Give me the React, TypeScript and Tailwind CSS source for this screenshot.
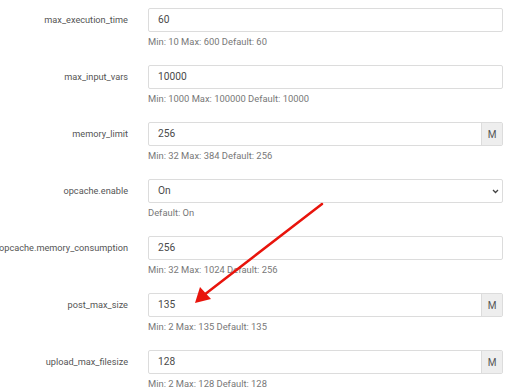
import React from "react";

type Row = {
  label: string;
  value: string;
  help: string;
  addon?: string;
  select?: boolean;
};

const rows: Row[] = [
  { label: "max_execution_time", value: "60", help: "Min: 10 Max: 600 Default: 60" },
  { label: "max_input_vars", value: "10000", help: "Min: 1000 Max: 100000 Default: 10000" },
  { label: "memory_limit", value: "256", help: "Min: 32 Max: 384 Default: 256", addon: "M" },
  { label: "opcache.enable", value: "On", help: "Default: On", select: true },
  { label: "opcache.memory_consumption", value: "256", help: "Min: 32 Max: 1024 Default: 256" },
  { label: "post_max_size", value: "135", help: "Min: 2 Max: 135 Default: 135", addon: "M" },
  { label: "upload_max_filesize", value: "128", help: "Min: 2 Max: 128 Default: 128", addon: "M" },
];

export default function App() {
  return (
    <div
      className="relative w-[512px] h-[390px] bg-white overflow-hidden"
      style={{ fontFamily: "Roboto, 'Liberation Sans', sans-serif" }}
    >
      <div className="flex flex-col pt-[8px] pr-[9px]">
        {rows.map((r) => (
          <div key={r.label} className="flex h-[57px]">
            <div className="w-[128px] shrink-0 h-[24px] flex items-center justify-end text-[9.2px] text-[#555] whitespace-nowrap">
              {r.label}
            </div>
            <div className="ml-[20px] flex-1 flex flex-col">
              <div className="flex h-[24px] border border-[#dcdcdc] rounded-[2px]">
                <div className="flex-1 flex items-center pl-[9px] text-[10.2px] text-[#4a4a4a]">
                  {r.value}
                </div>
                {r.addon && (
                  <div className="w-[21px] bg-[#eeeeee] border-l border-[#dcdcdc] flex items-center justify-center text-[10px] text-[#555]">
                    {r.addon}
                  </div>
                )}
                {r.select && (
                  <div className="w-[14px] flex items-center justify-center">
                    <svg width="7" height="5" viewBox="0 0 7 5">
                      <path d="M1 1 L3.5 3.5 L6 1" fill="none" stroke="#444" strokeWidth="1.3" />
                    </svg>
                  </div>
                )}
              </div>
              <div className="mt-[4px] text-[9.4px] leading-[12px] text-[#777] whitespace-nowrap">
                {r.help}
              </div>
            </div>
          </div>
        ))}
      </div>
      <svg
        className="absolute left-0 top-0 pointer-events-none"
        width="512"
        height="390"
        viewBox="0 0 512 390"
      >
        <line x1="322" y1="204" x2="204" y2="295" stroke="#e8140c" strokeWidth="2.5" strokeLinecap="round" />
        <polygon points="195,303 200,287 211,299" fill="#e8140c" />
      </svg>
    </div>
  );
}
